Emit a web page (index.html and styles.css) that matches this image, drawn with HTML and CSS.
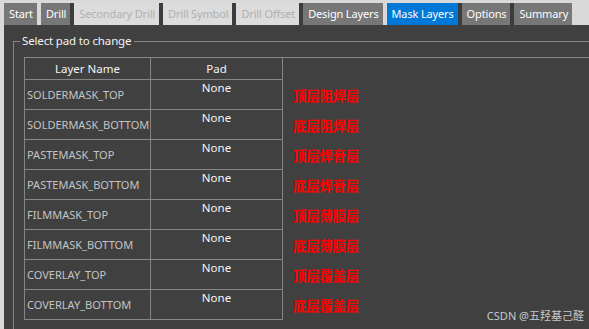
FILE: index.html
```html
<!DOCTYPE html>
<html lang="en">
<head>
    <meta charset="UTF-8">
    <meta name="viewport" content="width=device-width, initial-scale=1.0">
    <title>Mask Layers</title>
    <link rel="stylesheet" href="styles.css">
</head>
<body>
    <div class="tabs">
        <div class="tab">Start</div>
        <div class="tab">Drill</div>
        <div class="tab disabled sep">Secondary Drill</div>
        <div class="tab disabled sep">Drill Symbol</div>
        <div class="tab disabled sep">Drill Offset</div>
        <div class="tab sep">Design Layers</div>
        <div class="tab active">Mask Layers</div>
        <div class="tab sep">Options</div>
        <div class="tab sep">Summary</div>
    </div>

    <div class="panel">
        <fieldset class="group">
            <legend>Select pad to change</legend>

            <div class="table-frame">
                <div class="grid">
                    <div class="head">Layer Name</div>
                    <div class="head">Pad</div>
                    <div class="note-head"></div>

                    <div class="cell name">SOLDERMASK_TOP</div>
                    <div class="cell pad">None</div>
                    <div class="note">顶层阻焊层</div>

                    <div class="cell name">SOLDERMASK_BOTTOM</div>
                    <div class="cell pad">None</div>
                    <div class="note">底层阻焊层</div>

                    <div class="cell name">PASTEMASK_TOP</div>
                    <div class="cell pad">None</div>
                    <div class="note">顶层焊膏层</div>

                    <div class="cell name">PASTEMASK_BOTTOM</div>
                    <div class="cell pad">None</div>
                    <div class="note">底层焊膏层</div>

                    <div class="cell name">FILMMASK_TOP</div>
                    <div class="cell pad">None</div>
                    <div class="note">顶层薄膜层</div>

                    <div class="cell name">FILMMASK_BOTTOM</div>
                    <div class="cell pad">None</div>
                    <div class="note">底层薄膜层</div>

                    <div class="cell name">COVERLAY_TOP</div>
                    <div class="cell pad">None</div>
                    <div class="note">顶层覆盖层</div>

                    <div class="cell name">COVERLAY_BOTTOM</div>
                    <div class="cell pad">None</div>
                    <div class="note">底层覆盖层</div>
                </div>
            </div>
        </fieldset>

        <div class="watermark">CSDN @五羟基己醛</div>
    </div>
</body>
</html>
```

FILE: styles.css
```css
:root {
    --chrome: #d9d9d9;
    --panel: #404040;
    --line: #858585;
    --tab: #777777;
    --blue: #0078d7;
}

html, body {
    height: 100%;
}

body {
    margin: 0;
    background: var(--chrome);
    font-family: 'Noto Sans', 'Open Sans', sans-serif;
    font-size: 11px;
    color: #f2f2f2;
    overflow: hidden;
}

/* tab strip */
.tabs {
    display: flex;
    gap: 4px;
    height: 22px;
    padding: 3px 0 0 4px;
}

.tab {
    display: flex;
    align-items: center;
    padding: 0 4px 1px 5px;
    background: var(--tab);
    color: #ffffff;
    font-size: 11px;
    letter-spacing: -0.15px;
    white-space: nowrap;
}

.tab.sep {
    box-shadow: -4px 0 0 #3c3c3c;
}

.tab.disabled {
    background: #dcdcdc;
    color: #b0b0b0;
}

.tab.active {
    background: var(--blue);
}

/* content */
.panel {
    position: relative;
    margin-left: 4px;
    height: calc(100% - 25px);
    background: var(--panel);
    overflow: hidden;
}

.group {
    margin: 8px 0 0 9px;
    padding: 0;
    width: 800px;
    height: 400px;
    border: 1px solid var(--line);
    border-right: none;
    border-bottom: none;
}

.group legend {
    margin-left: 6px;
    padding: 0 3px 0 2px;
    line-height: 16px;
    font-size: 11.5px;
    letter-spacing: -0.15px;
    color: #f2f2f2;
}

.table-frame {
    margin: 8px 0 0 10px;
    border-top: 1px solid var(--line);
    border-left: 1px solid var(--line);
}

.grid {
    display: grid;
    grid-template-columns: 126px 132px 1fr;
    grid-auto-rows: 30px;
    grid-template-rows: 22px;
}

.head,
.cell {
    box-sizing: border-box;
    border-right: 1px solid var(--line);
    border-bottom: 1px solid var(--line);
}

.head {
    display: flex;
    align-items: center;
    justify-content: center;
    padding-bottom: 1px;
    font-size: 11.5px;
    color: #f4f4f4;
}

.cell.name {
    display: flex;
    align-items: center;
    padding-left: 2px;
    color: #c4c4c4;
    white-space: nowrap;
}

.cell.pad {
    text-align: center;
    line-height: 14px;
    padding-top: 1px;
    font-size: 11.5px;
    color: #f6f6f6;
}

.note {
    display: flex;
    align-items: center;
    padding: 0 0 1px 10px;
    font-family: 'Noto Sans CJK SC', sans-serif;
    font-weight: bold;
    font-size: 13.5px;
    color: #ff0000;
    letter-spacing: -0.3px;
}

.watermark {
    position: absolute;
    right: 5px;
    bottom: 6px;
    font-family: 'Noto Sans', 'Noto Sans CJK SC', sans-serif;
    font-size: 11px;
    color: #c8c8c8;
}
```
